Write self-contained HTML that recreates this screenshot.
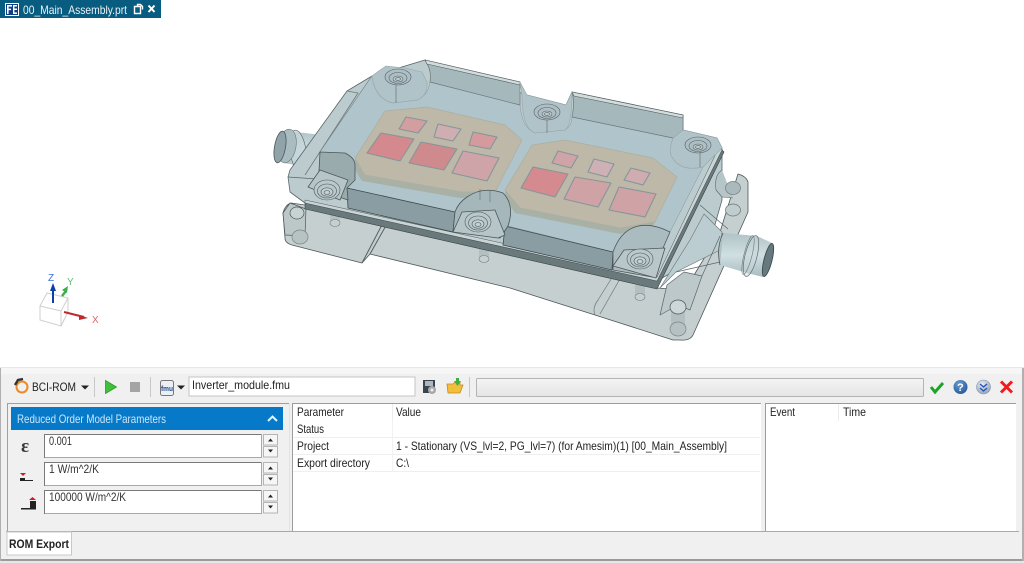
<!DOCTYPE html>
<html><head><meta charset="utf-8"><title>00_Main_Assembly.prt</title>
<style>html,body{margin:0;padding:0;background:#fff;overflow:hidden}svg{display:block;font-family:"Liberation Sans",sans-serif;filter:blur(.3px)}</style></head>
<body>
<svg width="1024" height="563" viewBox="0 0 1024 563" xmlns="http://www.w3.org/2000/svg">
<defs>
<linearGradient id="tube" x1="0" y1="0" x2="0" y2="1"><stop offset="0" stop-color="#b0c3c7"/><stop offset=".5" stop-color="#d0dfe2"/><stop offset="1" stop-color="#a8bcc0"/></linearGradient>
<linearGradient id="prog" x1="0" y1="0" x2="0" y2="1"><stop offset="0" stop-color="#f4f4f4"/><stop offset="1" stop-color="#e4e4e4"/></linearGradient>
<radialGradient id="help" cx=".4" cy=".3" r=".8"><stop offset="0" stop-color="#6d9bd0"/><stop offset="1" stop-color="#1c5596"/></radialGradient>
<radialGradient id="dbl" cx=".4" cy=".3" r=".8"><stop offset="0" stop-color="#e6eaf2"/><stop offset="1" stop-color="#8e9cb4"/></radialGradient>
<g id="scr" fill="none" stroke="#566266" stroke-width=".6">
<ellipse cx="0" cy="0" rx="13" ry="8" fill="#a9bbbf" fill-opacity=".5"/>
<ellipse cx="0" cy="1" rx="9" ry="5.500"/><ellipse cx="0" cy="2" rx="5" ry="3" fill="#bccacd"/><ellipse cx="0" cy="2" rx="2.500" ry="1.400"/>
</g>
<g id="scf" fill="none" stroke="#4d585f" stroke-width=".6">
<ellipse cx="0" cy="0" rx="13" ry="10" fill="#b9c8cb"/>
<ellipse cx="0" cy="1" rx="9.500" ry="7"/><ellipse cx="0" cy="2" rx="6" ry="4.200" fill="#c4d1d3"/><ellipse cx="0" cy="2.500" rx="3" ry="2"/>
</g>
</defs>
<rect width="1024" height="563" fill="#fff"/>

<!-- Title tab -->
<rect x="0" y="0" width="161" height="18" fill="#075c80"/>
<rect x="5" y="3" width="14" height="13" fill="#fff"/>
<rect x="6" y="4" width="12" height="11" fill="#123e86"/>
<path d="M7 5h5v1.600H8.600v2H11v1.500H8.600V14H7zM13 5h4v1.500h-2.600v2H17v1.500h-2.600v2.400H17V14h-4z" fill="#fff"/>
<text x="23" y="14" font-size="12" fill="#e9f2f6" textLength="104" lengthAdjust="spacingAndGlyphs">00_Main_Assembly.prt</text>
<path d="M134.500 6.500h6v7h-6zM137.500 6.500v-2h3l2 2v3" fill="none" stroke="#fff" stroke-width="1.400"/>
<path d="M148.500 5.500l6 6.500M154.500 5.500l-6 6.500" stroke="#fff" stroke-width="2" fill="none"/>

<!-- MODEL -->
<g stroke-linejoin="round">
<!-- base flange silhouette -->
<path d="M283 213Q285 205 291 203L305 205 657 288 685 290 720 232 738 174Q746 176 748 182L748 212 693 335Q690 341 680 340L673 340 595 315 510 288 370 254 362 263 292 245Q285 243 285 238Z" fill="#c6cfd0" stroke="#4d5759" stroke-width=".8"/>
<path d="M362 263L384 221M370 254L388 222" stroke="#555f60" stroke-width="1" fill="none"/>
<path d="M595 315Q592 308 598 300L618 268M600 314L625 270" stroke="#6b7678" stroke-width=".7" fill="none"/>
<!-- left connector -->
<path d="M282 131L305 133 330 136 330 170 305 167 284 163Z" fill="url(#tube)"/>
<ellipse cx="298" cy="151" rx="8" ry="21" transform="rotate(-8 298 151)" fill="#c5d5d8" fill-opacity=".8" stroke="#5f6c6f" stroke-width=".7"/>
<ellipse cx="287" cy="146" rx="9" ry="17" transform="rotate(10 287 146)" fill="#a9bcc0" stroke="#6a7679" stroke-width=".6"/>
<ellipse cx="280" cy="147" rx="5.500" ry="16" transform="rotate(10 280 147)" fill="#8fa3a8" stroke="#4d585b" stroke-width=".8"/>
<!-- right connector -->
<path d="M723 233L757 236 772 243 763 277 747 273 720 265Z" fill="url(#tube)"/>
<ellipse cx="751" cy="256" rx="6" ry="21" transform="rotate(14 751 256)" fill="#c8d8db" fill-opacity=".5" stroke="#5f6c6f" stroke-width=".7"/>
<ellipse cx="748" cy="255" rx="4" ry="20" transform="rotate(14 748 255)" fill="none" stroke="#6a7679" stroke-width=".6"/>
<ellipse cx="768" cy="260" rx="4" ry="17" transform="rotate(14 768 260)" fill="#66797e" stroke="#3f4a4d" stroke-width=".9"/>
<!-- housing body -->
<path d="M347 91L290 170 288 177 290 192 305 203 657 281 676 270 712 235 722 200 722 148 717 138 683 130 683 115 572 92 566 105 527 95 425 60 372 76Z" fill="#bccbce" stroke="#59666a" stroke-width=".8"/>
<path d="M288 177L317 179 332 160" fill="none" stroke="#59666a" stroke-width=".8"/>
<path d="M347 91L358 93 305 175" fill="none" stroke="#6d7a7d" stroke-width=".8"/>
<path d="M320 152L372 76" fill="none" stroke="#59666a" stroke-width=".9"/>
<!-- right rib area -->
<path d="M660 288L676 272 720 250 722 232 704 214 690 240Z" fill="#bccdd1" stroke="#687578" stroke-width=".6"/>
<path d="M660 315L667 285 684 272 702 276 690 310 678 305Z" fill="#bcc8ca" stroke="#59666a" stroke-width=".7"/>
<path d="M676 272L720 262M700 205L728 229M702 276L720 236" fill="none" stroke="#5a6669" stroke-width=".7"/>
<path d="M722 170Q714 175 716 190L722 197 733 198" fill="#b6c5c7" stroke="#59666a" stroke-width=".6"/>
<ellipse cx="733" cy="188" rx="7.500" ry="6.500" fill="#aab9bb" stroke="#737e80" stroke-width=".7"/>
<ellipse cx="733" cy="210" rx="7.500" ry="6" fill="#c0cdcf" stroke="#65706f" stroke-width=".7"/>
<path d="M723 233Q716 248 720 265" fill="#aebfc2" stroke="#4d5759" stroke-width=".8"/>
<!-- left tab -->
<path d="M290 203L283 213 285 235 305 236 306 209Z" fill="#bcc7c8" stroke="#4d5759" stroke-width=".7"/>
<ellipse cx="297" cy="213" rx="7" ry="6" fill="#c8d2d3" stroke="#4d5759" stroke-width=".7"/>
<ellipse cx="300" cy="237" rx="8" ry="7" fill="#b7c2c3" stroke="#7a8688" stroke-width=".7"/>
<rect x="330" y="212" width="10" height="12" fill="#b3bfc0"/><ellipse cx="335" cy="223" rx="5" ry="3.500" fill="#c6d0d1" stroke="#727d7e" stroke-width=".6"/>
<rect x="479" y="245" width="10" height="14" fill="#b3bfc0"/><ellipse cx="484" cy="259" rx="5" ry="3.500" fill="#c6d0d1" stroke="#727d7e" stroke-width=".6"/>
<rect x="635" y="285" width="10" height="13" fill="#b3bfc0"/><ellipse cx="640" cy="297" rx="5" ry="3.500" fill="#c6d0d1" stroke="#727d7e" stroke-width=".6"/>
<rect x="671" y="308" width="14" height="22" fill="#b3bfc0"/>
<ellipse cx="678" cy="307" rx="8" ry="7" fill="#ced7d8" stroke="#4d5759" stroke-width=".7"/>
<ellipse cx="678" cy="329" rx="8" ry="7" fill="#b5c1c2" stroke="#7a8688" stroke-width=".7"/>
<!-- plate band -->
<path d="M305 203L657 281 722 150 724 152 657 289 305 209Z" fill="#69797c" stroke="#394345" stroke-width=".6"/>
<path d="M305 200L657 277 719 147 722 150 657 281 305 203Z" fill="#c9d4d6" stroke="#4c5759" stroke-width=".5"/>
<!-- lid top -->
<path d="M372 76L373 82Q378 100 393 103L417 100Q428 96 430 82L520 105Q522 128 535 133L565 130Q572 126 572 117L673 138Q668 152 672 157Q680 172 703 167L670 232Q650 222 635 227Q620 232 613 252L508 226Q515 205 503 193 483 186 467 197 458 203 455 212L347 188 355 175 355 165 343 157 320 152Z" fill="#afc5cb" stroke="#8595a0" stroke-width=".5"/>
<!-- back walls -->
<path d="M425 60L520 82 520 105 430 82Q432 70 425 60Z" fill="#a5b9bd" stroke="#6b787b" stroke-width=".7"/>
<path d="M425 60L520 82 520 85 427 64Z" fill="#d3dcdd" stroke="#505a5c" stroke-width=".6"/>
<path d="M572 92L683 115 683 133 673 138 572 117Q575 102 572 92Z" fill="#a5b9bd" stroke="#6b787b" stroke-width=".7"/>
<path d="M572 92L683 115 683 118 574 96Z" fill="#d3dcdd" stroke="#505a5c" stroke-width=".6"/>
<!-- bosses back -->
<path d="M372 76Q380 70 386 66L405 68 422 72 427 82Q428 96 417 100L393 103Q378 100 373 82Z" fill="#b0c3c8" stroke="#98a5a9" stroke-width=".6"/>
<path d="M520 82L522 96Q522 128 535 133L565 130Q572 126 572 92L566 105 527 95Z" fill="#b0c3c8" stroke="#98a5a9" stroke-width=".6"/>
<path d="M683 130L717 138 722 148 703 167Q680 172 672 157 668 152 673 138Z" fill="#b0c3c8" stroke="#98a5a9" stroke-width=".6"/>
<use href="#scr" x="398" y="77"/><use href="#scr" x="547" y="112"/><use href="#scr" x="698" y="145"/>
<!-- substrates -->
<path d="M385 111L427 107 505 125 522 140 495 192 462 192 365 175 355 158Z" fill="#bdb8a8" stroke="#acae9f" stroke-width=".7"/>
<path d="M505 190L532 145 565 140 653 158 677 177 655 222 620 228 520 208Z" fill="#bdb8a8" stroke="#acae9f" stroke-width=".7"/>
<path d="M355 158L365 175 462 192 495 192 493 198 460 198 362 181 355 170Z" fill="#a9b1a6"/>
<path d="M505 190L520 208 620 228 655 222 652 228 620 234 515 213 505 198Z" fill="#a9b1a6"/>
<!-- dies -->
<g stroke="#84969a" stroke-width="1.100">
<path d="M406 117L427 121 418 133 399 129Z" fill="#d39ea0"/>
<path d="M438 124L461 129 453 141 434 137Z" fill="#cfaeb2"/>
<path d="M473 132L497 137 490 149 469 145Z" fill="#d49a9e"/>
<path d="M381 133L414 139 400 161 367 153Z" fill="#d4898f"/>
<path d="M421 142L457 149 444 170 409 163Z" fill="#cf8a8d"/>
<path d="M463 151L499 158 487 181 452 173Z" fill="#cfa4a8"/>
<path d="M558 151L578 156 571 168 552 163Z" fill="#cfa4a8"/>
<path d="M594 159L614 164 607 177 588 172Z" fill="#cfb0b5"/>
<path d="M631 168L650 173 643 185 624 180Z" fill="#cfacb0"/>
<path d="M533 167L568 174 555 197 521 188Z" fill="#d48a8f"/>
<path d="M575 177L611 183 598 207 564 199Z" fill="#cfa2a6"/>
<path d="M619 187L656 194 645 217 609 210Z" fill="#cfa2a6"/>
</g>
<!-- front walls -->
<path d="M347 188L455 212 453 232 348 208Z" fill="#8a9da2" stroke="#3f4a4d" stroke-width=".8"/>
<path d="M505 226L613 252 612 270 503 245Z" fill="#8a9da2" stroke="#3f4a4d" stroke-width=".8"/>
<path d="M320 152L345 153Q355 158 355 165L355 180 347 188 348 200 318 190Z" fill="#9aabae" stroke="#4a5558" stroke-width=".8"/>
<!-- front bosses -->
<path d="M308 187L320 170 348 180 340 200Z" fill="#b6c5c8" stroke="#4d5759" stroke-width=".8"/>
<path d="M455 212Q458 203 467 197 483 186 503 193 515 205 508 226L500 238 453 232Z" fill="#a6b7bb" stroke="#4a5558" stroke-width=".8"/>
<path d="M453 232L462 212 495 210 505 235 498 238Z" fill="#b6c5c8" stroke="#4d5759" stroke-width=".8"/>
<path d="M613 252Q620 232 635 227 650 222 670 232L660 255 652 277 613 270Z" fill="#abbcc0" stroke="#4d5759" stroke-width=".8"/>
<path d="M613 266L624 250 665 248 656 278Z" fill="#b9c7ca" stroke="#4d5759" stroke-width=".8"/>
<use href="#scf" x="327" y="190"/><use href="#scf" x="478" y="222"/><use href="#scf" x="640" y="259"/>
<path d="M480 189V200M490 190V202M396 103V85M547 133V120M700 167V152" stroke="#5e6b6e" stroke-width=".6" fill="none"/>
</g>

<!-- triad -->
<g fill="none" stroke="#cfcfcf" stroke-width="1">
<path d="M40 306L47 293 68 298 61 311V326L40 320ZM61 311L40 306M68 298V312L61 326"/>
</g>
<path d="M53 286V303" stroke="#0d3fa6" stroke-width="2"/>
<path d="M53 283l3 8h-6z" fill="#0d3fa6"/>
<path d="M62 296l4-5" stroke="#3cae4a" stroke-width="2.500"/><path d="M68 286l-1 7-5-3z" fill="#3cae4a"/>
<path d="M64 312L84 317" stroke="#c0282e" stroke-width="2"/><path d="M88 318l-9-3 0 5z" fill="#c0282e"/>
<text x="48" y="281" font-size="10" fill="#3a6fe0">Z</text>
<text x="67" y="285" font-size="10" fill="#5cc068">Y</text>
<text x="92" y="323" font-size="10" fill="#e0656a">X</text>

<!-- bottom panel -->
<rect x="0" y="367" width="1024" height="196" fill="#f0f0f0"/>
<rect x="0" y="367" width="1024" height="1" fill="#e8e8e8"/>
<rect x="0" y="368" width="1024" height="6" fill="#f6f6f6"/>
<rect x="6" y="374" width="1013" height="157" fill="#f0f0f0"/>
<rect x="0" y="559" width="1024" height="2" fill="#9a9a9a"/>
<rect x="0" y="561" width="1024" height="2" fill="#e6e6e6"/>
<rect x="1022" y="368" width="2" height="193" fill="#b0b0b0"/>
<rect x="0" y="368" width="1" height="193" fill="#b0b0b0"/>

<!-- toolbar -->
<circle cx="22" cy="387" r="5.500" fill="none" stroke="#ee8a25" stroke-width="2"/>
<path d="M15 385l3-5 5-1" stroke="#333" stroke-width="2.400" fill="none"/>
<text x="32" y="391" font-size="12" fill="#222" textLength="44" lengthAdjust="spacingAndGlyphs">BCI-ROM</text>
<path d="M81 385.500h8l-4 4z" fill="#222"/>
<rect x="94" y="377" width="1" height="20" fill="#c8c8c8"/>
<path d="M105.500 380.500l11 6.500-11 6.500z" fill="#3fc03a" stroke="#2b9a2b" stroke-width=".8"/>
<rect x="130" y="382" width="10" height="10" fill="#a4a4a4"/>
<rect x="150" y="377" width="1" height="20" fill="#c8c8c8"/>
<rect x="160.500" y="380.500" width="13" height="15" rx="2" fill="#eceff4" stroke="#777"/>
<text x="161" y="391" font-size="7" fill="#234a8c" font-weight="bold" textLength="12" lengthAdjust="spacingAndGlyphs">fmu</text>
<path d="M177 385.500h8l-4 4z" fill="#222"/>
<rect x="189" y="377" width="226" height="19" fill="#fff" stroke="#c4c4c4"/>
<text x="192" y="389" font-size="12" fill="#222" textLength="98" lengthAdjust="spacingAndGlyphs">Inverter_module.fmu</text>
<path d="M423 380h12v13h-12z" fill="#3a4450"/><rect x="425" y="381" width="8" height="5" fill="#aeb6c0"/>
<circle cx="432" cy="390" r="4" fill="#a8a8a8"/><circle cx="432" cy="390" r="1.500" fill="#eee"/>
<path d="M447 384h6l2-2h5v3h3l-3 8h-12z" fill="#f2bf3c" stroke="#c28a1c" stroke-width=".8"/>
<path d="M456 378h3v3h2l-3.500 5-3.500-5h2z" fill="#3cb043"/>
<rect x="469" y="377" width="1" height="20" fill="#c8c8c8"/>
<rect x="476.500" y="378.500" width="447" height="18" rx="1" fill="url(#prog)" stroke="#b4b4b4"/>
<path d="M931 387l4 5 8-9" fill="none" stroke="#1ea32a" stroke-width="3"/>
<circle cx="960.500" cy="387" r="7" fill="url(#help)"/>
<text x="957" y="391" font-size="11" font-weight="bold" fill="#fff">?</text>
<circle cx="983.500" cy="387" r="7" fill="url(#dbl)" stroke="#8a95a8" stroke-width=".6"/>
<path d="M980 384l3.500 3 3.500-3M980 388l3.500 3 3.500-3" fill="none" stroke="#2456b8" stroke-width="1.400"/>
<path d="M1001 381.500l11 11M1012 381.500l-11 11" stroke="#ee1c1c" stroke-width="3"/>

<!-- left group -->
<rect x="7" y="403" width="282" height="128" fill="#f0f0f0"/>
<path d="M7.500 531V403.500H289" fill="none" stroke="#a0a0a0"/>
<path d="M289.500 403V531" stroke="#e4e4e4"/>
<rect x="11" y="407" width="272" height="23" fill="#0779c9"/>
<text x="17" y="423" font-size="12" fill="#cfe6f6" textLength="149" lengthAdjust="spacingAndGlyphs">Reduced Order Model Parameters</text>
<path d="M268 421l4.500-4.500 4.500 4.500" fill="none" stroke="#e8f3fa" stroke-width="2"/>

<text x="21" y="452" font-size="19" font-weight="bold" fill="#3a3a3a" font-family="Liberation Serif,serif">ε</text>
<path d="M20 473h6l-3 3z" fill="#d21a1a"/><rect x="20" y="478" width="5" height="3" fill="#222"/><rect x="20" y="480" width="13" height="1" fill="#222"/>
<path d="M29 500l3.500-3 3.500 3z" fill="#d21a1a"/><rect x="30" y="501" width="6" height="8" fill="#222"/><rect x="21" y="508" width="15" height="1.500" fill="#222"/>

<g fill="#fff" stroke="#a8a8a8">
<rect x="44.500" y="434.500" width="217" height="23"/>
<rect x="44.500" y="462.500" width="217" height="23"/>
<rect x="44.500" y="490.500" width="217" height="23"/>
</g>
<g fill="none" stroke="#7a7a7a"><path d="M44.500 458V434.500H261"/><path d="M44.500 486V462.500H261"/><path d="M44.500 514V490.500H261"/></g>
<text x="49" y="445" font-size="12" fill="#333" textLength="23" lengthAdjust="spacingAndGlyphs">0.001</text>
<text x="49" y="473" font-size="12" fill="#333" textLength="50" lengthAdjust="spacingAndGlyphs">1 W/m^2/K</text>
<text x="49" y="501" font-size="12" fill="#333" textLength="77" lengthAdjust="spacingAndGlyphs">100000 W/m^2/K</text>
<g fill="#f6f6f6" stroke="#b4b4b4">
<rect x="263.500" y="434.500" width="14" height="10.500"/><rect x="263.500" y="446.500" width="14" height="10.500"/>
<rect x="263.500" y="462.500" width="14" height="10.500"/><rect x="263.500" y="474.500" width="14" height="10.500"/>
<rect x="263.500" y="490.500" width="14" height="10.500"/><rect x="263.500" y="502.500" width="14" height="10.500"/>
</g>
<g fill="#222">
<path d="M268 441.500h5l-2.500-3z"/><path d="M268 449.500h5l-2.500 3z"/>
<path d="M268 469.500h5l-2.500-3z"/><path d="M268 477.500h5l-2.500 3z"/>
<path d="M268 497.500h5l-2.500-3z"/><path d="M268 505.500h5l-2.500 3z"/>
</g>

<!-- table -->
<rect x="292" y="403" width="469" height="128" fill="#fff"/>
<path d="M292.500 531V403.500H761" fill="none" stroke="#9c9c9c"/>
<rect x="392" y="404" width="1" height="17" fill="#ececec"/>
<rect x="293" y="437" width="467" height="1" fill="#efefef"/>
<rect x="293" y="454" width="467" height="1" fill="#efefef"/>
<rect x="293" y="471" width="467" height="1" fill="#efefef"/>
<rect x="392" y="421" width="1" height="50" fill="#f2f2f2"/>
<text x="297" y="416" font-size="12" fill="#222" textLength="47" lengthAdjust="spacingAndGlyphs">Parameter</text>
<text x="396" y="416" font-size="12" fill="#222" textLength="25" lengthAdjust="spacingAndGlyphs">Value</text>
<text x="297" y="433" font-size="12" fill="#222" textLength="27" lengthAdjust="spacingAndGlyphs">Status</text>
<text x="297" y="450" font-size="12" fill="#222" textLength="32" lengthAdjust="spacingAndGlyphs">Project</text>
<text x="396" y="450" font-size="12" fill="#222" textLength="331" lengthAdjust="spacingAndGlyphs">1 - Stationary (VS_lvl=2, PG_lvl=7) (for Amesim)(1) [00_Main_Assembly]</text>
<text x="297" y="467" font-size="12" fill="#222" textLength="73" lengthAdjust="spacingAndGlyphs">Export directory</text>
<text x="396" y="467" font-size="12" fill="#222" textLength="13" lengthAdjust="spacingAndGlyphs">C:\</text>

<!-- events -->
<rect x="765" y="403" width="251" height="128" fill="#fff"/>
<path d="M765.500 531V403.500H1016" fill="none" stroke="#9c9c9c"/>
<rect x="838" y="404" width="1" height="17" fill="#ececec"/>
<text x="770" y="416" font-size="12" fill="#222" textLength="25" lengthAdjust="spacingAndGlyphs">Event</text>
<text x="843" y="416" font-size="12" fill="#222" textLength="23" lengthAdjust="spacingAndGlyphs">Time</text>

<!-- tab strip -->
<rect x="6" y="531" width="1013" height="1" fill="#a8a8a8"/>
<rect x="7" y="532" width="64.500" height="23" fill="#fff" stroke="#c8c8c8"/>
<text x="9" y="548" font-size="12" font-weight="bold" fill="#222" textLength="60" lengthAdjust="spacingAndGlyphs">ROM Export</text>
</svg>
</body></html>
